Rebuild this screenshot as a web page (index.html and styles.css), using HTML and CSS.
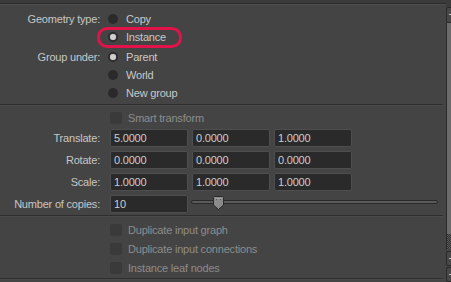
FILE: index.html
```html
<!DOCTYPE html>
<html>
<head>
<meta charset="utf-8">
<link rel="stylesheet" href="styles.css">
</head>
<body>
<div class="window">
  <div class="panel">
    <div class="topstrip"></div>
    <div class="section s1">
      <div class="row radio-row">
        <div class="label">Geometry type:</div>
        <div class="ctrl"><span class="radio"></span><span class="txt">Copy</span></div>
      </div>
      <div class="row radio-row gap-after">
        <div class="label"></div>
        <div class="ctrl"><span class="radio on"></span><span class="txt">Instance</span></div>
      </div>
      <div class="row radio-row">
        <div class="label">Group under:</div>
        <div class="ctrl"><span class="radio on"></span><span class="txt">Parent</span></div>
      </div>
      <div class="row radio-row">
        <div class="label"></div>
        <div class="ctrl"><span class="radio"></span><span class="txt">World</span></div>
      </div>
      <div class="row radio-row">
        <div class="label"></div>
        <div class="ctrl"><span class="radio"></span><span class="txt">New group</span></div>
      </div>
      <div class="highlight"></div>
    </div>
    <div class="sep"></div>
    <div class="section s2">
      <div class="row check-row smart">
        <div class="label"></div>
        <div class="ctrl"><span class="check"></span><span class="txt dis">Smart transform</span></div>
      </div>
      <div class="row field-row">
        <div class="label">Translate:</div>
        <div class="ctrl fields"><span class="field">5.0000</span><span class="field">0.0000</span><span class="field">1.0000</span></div>
      </div>
      <div class="row field-row">
        <div class="label">Rotate:</div>
        <div class="ctrl fields"><span class="field">0.0000</span><span class="field">0.0000</span><span class="field">0.0000</span></div>
      </div>
      <div class="row field-row">
        <div class="label">Scale:</div>
        <div class="ctrl fields"><span class="field">1.0000</span><span class="field">1.0000</span><span class="field">1.0000</span></div>
      </div>
      <div class="row field-row">
        <div class="label">Number of copies:</div>
        <div class="ctrl fields">
          <span class="field">10</span>
          <div class="slider">
            <div class="track"></div>
            <svg class="thumb" width="11" height="14" viewBox="0 0 11 14">
              <path d="M1.5 0.5 H9.5 Q10.5 0.5 10.5 1.5 V9 L5.5 13.5 L0.5 9 V1.5 Q0.5 0.5 1.5 0.5 Z" fill="#8a8a8a" stroke="#2a2a2a" stroke-width="1"/>
              <rect x="3" y="3" width="1" height="1" fill="#555"/>
              <rect x="7" y="3" width="1" height="1" fill="#555"/>
              <rect x="2" y="2" width="7" height="1" fill="#a0a0a0"/>
            </svg>
          </div>
        </div>
      </div>
    </div>
    <div class="sep"></div>
    <div class="section s3">
      <div class="row check-row2">
        <div class="label"></div>
        <div class="ctrl"><span class="check"></span><span class="txt dis">Duplicate input graph</span></div>
      </div>
      <div class="row check-row2">
        <div class="label"></div>
        <div class="ctrl"><span class="check"></span><span class="txt dis">Duplicate input connections</span></div>
      </div>
      <div class="row check-row2">
        <div class="label"></div>
        <div class="ctrl"><span class="check"></span><span class="txt dis">Instance leaf nodes</span></div>
      </div>
    </div>
    <div class="sep bottom"></div>
  </div>
  <div class="scrollbar">
    <div class="sb-top"></div>
    <div class="sb-btn first"><span class="mark"></span></div>
    <div class="sb-track"></div>
    <div class="sb-dither"></div>
    <div class="sb-btn"><span class="mark"></span></div>
    <div class="sb-btn"><span class="mark"></span></div>
  </div>
</div>
</body>
</html>
```

FILE: styles.css
```css
html, body {
  margin: 0;
  padding: 0;
  width: 451px;
  height: 282px;
  overflow: hidden;
  background: #444444;
  font-family: "Liberation Sans", Arial, sans-serif;
  font-size: 11px;
  letter-spacing: -0.2px;
  color: #c8c8c8;
}

.window {
  display: flex;
  width: 451px;
  height: 282px;
}

.panel {
  flex: 1;
  display: flex;
  flex-direction: column;
  min-width: 0;
}

.topstrip {
  height: 3px;
  background: #3b3b3b;
  border-bottom: 1px solid #2c2c2c;
  box-shadow: 0 1px 0 #4d4d4d;
  margin-bottom: 1px;
}

.section {
  position: relative;
}

.s1 {
  padding-top: 5px;
  padding-bottom: 2px;
}

.s2 {
  padding-top: 3px;
  padding-bottom: 2px;
}

.s3 {
  padding-top: 3px;
}

.row {
  display: grid;
  grid-template-columns: 100px 1fr;
  column-gap: 8px;
  align-items: center;
}

.radio-row { height: 18px; }
.gap-after { margin-bottom: 2px; }

.check-row { height: 18px; }
.smart { margin-bottom: 2px; }

.field-row {
  height: 18px;
  margin-bottom: 4px;
}
.field-row:last-child { margin-bottom: 0; }

.check-row2 { height: 19px; }

.label {
  text-align: right;
  white-space: nowrap;
  color: #c6c6c6;
}

.ctrl {
  display: flex;
  align-items: center;
  height: 100%;
}

.radio {
  width: 10px;
  height: 10px;
  border-radius: 50%;
  background: #2a2a2a;
  flex: none;
  display: flex;
  align-items: center;
  justify-content: center;
}

.radio.on::after {
  content: "";
  width: 6px;
  height: 6px;
  border-radius: 50%;
  background: #cfcfcf;
  box-shadow: 0 0 1px #999;
}

.radio + .txt {
  margin-left: 8px;
}

.check {
  width: 12px;
  height: 12px;
  border-radius: 2px;
  background: #3a3a3a;
  flex: none;
  margin-left: 2px;
}

.check + .txt {
  margin-left: 6px;
}

.txt { white-space: nowrap; }
.txt.dis { color: #8c8c8c; }

.fields {
  gap: 4px;
  padding-left: 2px;
}

.field {
  box-sizing: border-box;
  width: 78px;
  height: 18px;
  background: #2a2a2a;
  border: 1px solid #4e4e4e;
  border-radius: 2px;
  padding-left: 3px;
  line-height: 16px;
  color: #cdcdcd;
  flex: none;
}

.slider {
  position: relative;
  flex: none;
  width: 247px;
  height: 18px;
  margin-left: -1px;
}

.track {
  position: absolute;
  left: 0;
  right: 0;
  top: 5px;
  height: 4px;
  box-sizing: border-box;
  border: 1px solid #2a2a2a;
  border-radius: 2px;
  background: #5a5a5a;
}

.thumb {
  position: absolute;
  left: 22px;
  top: 1px;
}

.sep {
  height: 1px;
  background: #2e2e2e;
  box-shadow: 0 1px 0 #4a4a4a;
  margin-right: 3px;
  margin-bottom: 1px;
  flex: none;
}

.sep.bottom {
  margin-top: 1px;
}

.highlight {
  position: absolute;
  left: 97px;
  top: 22px;
  width: 85px;
  height: 21px;
  box-sizing: border-box;
  border: 3px solid #e2124b;
  border-radius: 10px;
}

.scrollbar {
  width: 5px;
  flex: none;
  display: flex;
  flex-direction: column;
}

.sb-top {
  height: 7px;
  background: #3b3b3b;
}

.sb-btn {
  box-sizing: border-box;
  height: 15px;
  background: #474747;
  border: 1px solid #2a2a2a;
  border-right: none;
  border-radius: 2px 0 0 2px;
  position: relative;
  margin-top: 1px;
}

.sb-btn.first {
  height: 16px;
  margin-top: 0;
}

.sb-btn .mark {
  position: absolute;
  left: 2px;
  top: 6px;
  width: 3px;
  height: 1px;
  background: #bdbdbd;
}

.sb-track {
  flex: 1;
  background: #6b6b6b;
  border-left: 1px solid #2a2a2a;
}

.sb-dither {
  height: 16px;
  border-left: 1px solid #2a2a2a;
  background-color: #3a3a3a;
  background-image: repeating-conic-gradient(#5a5a5a 0 25%, #333333 0 50%);
  background-size: 2px 2px;
}
```
